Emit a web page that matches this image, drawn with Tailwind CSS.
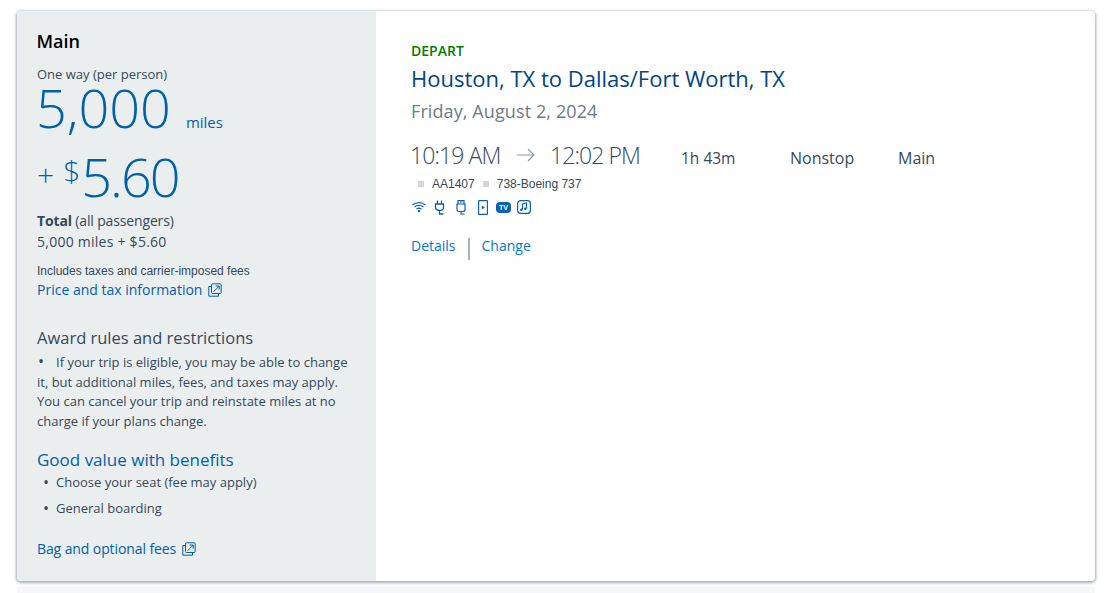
<!DOCTYPE html>
<html lang="en">
<head>
  <meta charset="UTF-8">
  <title>Flight choice</title>
  <script src="https://cdn.jsdelivr.net/npm/@tailwindcss/browser@4"></script>
</head>
<body class="bg-white h-[593px] overflow-hidden font-['Open_Sans',sans-serif] text-[#36495a]">
  <div class="relative pt-[11px] px-[17px] pr-[16px]">
    <!-- next card peeking out under this one -->
    <div class="absolute left-[17px] right-[16px] top-[586px] h-[20px] bg-[#f6f7f8] rounded-t"></div>
    <div class="relative flex h-[570px] bg-white rounded shadow-[0_1px_3px_1px_rgba(90,105,120,0.55)]">

      <!-- left column -->
      <div class="w-[359px] shrink-0 bg-[#ebeeef] rounded-l pl-[20px] pr-[18px]">
        <h2 class="mt-[17px] -ml-[0.5px] text-[18px] leading-[26px] font-semibold text-black">Main</h2>
        <p class="mt-[11px] text-[13px] leading-[18px]">One way (per person)</p>
        <div class="flex items-baseline h-[52px] -mt-[2px] text-[#0061ab]">
          <span class="-ml-[1px] text-[54px] leading-[52px] font-light">5,000</span>
          <span class="ml-[15px] text-[15px] leading-[20px]">miles</span>
        </div>
        <div class="flex items-start h-[52px] mt-[17px] text-[#0061ab]">
          <span class="mt-[9px] text-[30px] leading-[32px] font-light">+</span>
          <span class="ml-[9px] mt-[5px] text-[30px] leading-[32px] font-light">$</span>
          <span class="ml-[1px] text-[54px] leading-[52px] font-light tracking-[-2px]">5.60</span>
        </div>
        <p class="mt-[9px] text-[14px] leading-[20px] tracking-[-0.15px]"><span class="font-bold">Total</span> (all passengers)</p>
        <p class="text-[14px] leading-[21px] tracking-[0.25px]">5,000 miles + $5.60</p>
        <p class="mt-[11px] font-['Liberation_Sans',sans-serif] text-[12px] leading-[16px]">Includes taxes and carrier-imposed fees</p>
        <a class="mt-[1px] flex items-center text-[14px] leading-[20px] text-[#0061ab]">
          Price and tax information
          <svg class="ml-[6px]" width="14" height="14" viewBox="0 0 14 14" fill="none" stroke="#0061ab" stroke-width="1">
            <path d="M3.500 3.500H.8v9.700h9.700v-2.700"/>
            <rect x="3.500" y=".8" width="9.700" height="9.700" rx="1"/>
            <path d="M5.500 8.800 11 3.200M7.500 3h3.700v3.700"/>
          </svg>
        </a>
        <h3 class="mt-[27px] text-[16.500px] leading-[22px]">Award rules and restrictions</h3>
        <p class="mt-[4px] text-[13px] leading-[19.500px]"><span class="inline-block w-[19px] pl-[1px] text-[16px] leading-none">•</span>If your trip is eligible, you may be able to change it, but additional miles, fees, and taxes may apply. You can cancel your trip and reinstate miles at no charge if your plans change.</p>
        <h3 class="mt-[18px] text-[17px] leading-[22px] text-[#0061ab]">Good value with benefits</h3>
        <ul class="mt-[1px] text-[13px] leading-[20px]">
          <li class="flex"><span class="w-[19px] pl-[6px] text-[16px]">•</span>Choose your seat (fee may apply)</li>
          <li class="flex mt-[6px]"><span class="w-[19px] pl-[6px] text-[16px]">•</span>General boarding</li>
        </ul>
        <a class="mt-[21px] flex items-center text-[14px] leading-[20px] tracking-[-0.1px] text-[#0061ab]">
          Bag and optional fees
          <svg class="ml-[6px]" width="14" height="14" viewBox="0 0 14 14" fill="none" stroke="#0061ab" stroke-width="1">
            <path d="M3.500 3.500H.8v9.700h9.700v-2.700"/>
            <rect x="3.500" y=".8" width="9.700" height="9.700" rx="1"/>
            <path d="M5.500 8.800 11 3.200M7.500 3h3.700v3.700"/>
          </svg>
        </a>
      </div>

      <!-- right column -->
      <div class="flex-1 pl-[35px]">
        <p class="mt-[30px] text-[14px] leading-[20px] font-semibold text-[#008000]">DEPART</p>
        <h1 class="mt-[3px] text-[22px] leading-[28px] text-[#00467f]">Houston, TX to Dallas/Fort Worth, TX</h1>
        <p class="mt-[6px] text-[18px] leading-[26px] tracking-[0.1px] text-[#6e7a85]">Friday, August 2, 2024</p>
        <div class="mt-[15px] flex items-baseline h-[32px] whitespace-nowrap">
          <span class="w-[91px] -ml-[1px] text-[23px] leading-[32px] tracking-[-0.9px] font-light">10:19 AM</span>
          <svg class="ml-[16px] self-center" width="18" height="14" viewBox="0 0 18 14" fill="none" stroke="#8d99a3" stroke-width="1.200">
            <path d="M0 7h17M11 1l6 6-6 6"/>
          </svg>
          <span class="ml-[15px] w-[91px] text-[23px] leading-[32px] tracking-[-0.9px] font-light">12:02 PM</span>
          <span class="ml-[40px] w-[109px] text-[15.500px]">1h 43m</span>
          <span class="w-[108px] text-[16px]">Nonstop</span>
          <span class="text-[16px]">Main</span>
        </div>
        <div class="mt-[5px] flex items-center pl-[7px] font-['Liberation_Sans',sans-serif] text-[12px] leading-[16px]">
          <span class="w-[6px] h-[6px] bg-[#d0d6dc]"></span>
          <span class="ml-[8px]">AA1407</span>
          <span class="ml-[8px] w-[6px] h-[6px] bg-[#d0d6dc]"></span>
          <span class="ml-[8px]">738-Boeing 737</span>
        </div>
        <div class="mt-[7px] flex items-center h-[16px] text-[#0b5fb5]">
          <svg class="ml-[1px]" width="14" height="12" viewBox="0 0 14 12" fill="none" stroke="currentColor" stroke-width="1.200">
            <path d="M.5 4C4 .8 10 .8 13.500 4M2.500 6C5 3.900 9 3.900 11.500 6M4.500 8C6 6.900 8 6.900 9.500 8"/>
            <circle cx="7" cy="10" r="1.200" fill="currentColor" stroke="none"/>
          </svg>
          <svg class="ml-[8px]" width="11" height="15" viewBox="0 0 11 15" fill="none" stroke="currentColor" stroke-width="1.300">
            <path d="M3.500 .5v3.500M7.500 .5v3.500M1.500 4h8v3.500a4 3 0 0 1-8 0zM5.500 10.500v3.500h4"/>
          </svg>
          <svg class="ml-[11px]" width="10" height="15" viewBox="0 0 10 15" fill="none" stroke="currentColor" stroke-width="1.200">
            <path d="M2 4V.6h6V4M1 4h8v5.500a2 2 0 0 1-2 2H3a2 2 0 0 1-2-2zM5 11.500v2.500h3.500M4 2.200h.8M5.500 2.200h.8"/>
          </svg>
          <svg class="ml-[12px]" width="10" height="15" viewBox="0 0 10 15" fill="none" stroke="currentColor" stroke-width="1.200">
            <rect x=".6" y=".6" width="8.800" height="13.800" rx=".5"/>
            <path d="M3.800 5.500l3 2-3 2z" fill="currentColor" stroke="none"/>
          </svg>
          <span class="ml-[8px] w-[15px] h-[11px] rounded-[4px] bg-[#0b5fb5] text-white text-[7px] leading-[11px] font-bold text-center font-['Liberation_Sans',sans-serif]">TV</span>
          <svg class="ml-[6px]" width="14" height="14" viewBox="0 0 14 14" fill="none" stroke="currentColor" stroke-width="1.200">
            <rect x=".6" y=".6" width="12.800" height="12.800" rx="3"/>
            <path d="M5.500 9.500V4l4-1v5.500"/>
            <circle cx="4.300" cy="9.700" r="1.300" fill="currentColor" stroke="none"/>
            <circle cx="8.300" cy="8.700" r="1.300" fill="currentColor" stroke="none"/>
          </svg>
        </div>
        <div class="mt-[21px] flex items-start text-[14px] leading-[20px] text-[#0078d2]">
          <a>Details</a>
          <span class="ml-[12px] mt-[2px] w-[2px] h-[22px] bg-[#a8b0b7]"></span>
          <a class="ml-[12px]">Change</a>
        </div>
      </div>
    </div>
  </div>
</body>
</html>
